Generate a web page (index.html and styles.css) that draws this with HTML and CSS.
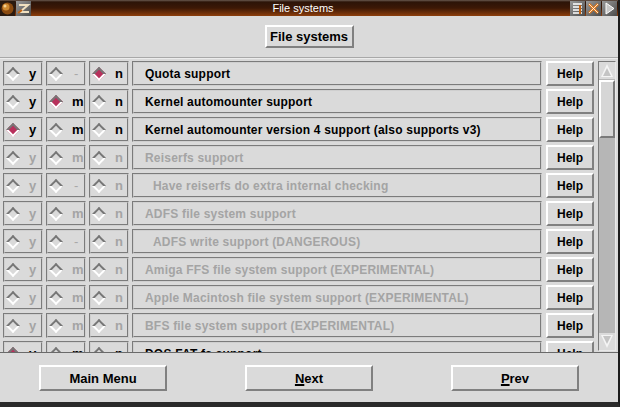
FILE: index.html
```html
<!DOCTYPE html>
<html lang="en">
<head>
    <meta charset="UTF-8">
    <title>File systems</title>
    <link rel="stylesheet" href="styles.css">
</head>
<body>
<div class="window">
    <div class="titlebar">
        <div class="tb-icons">
            <span class="tb-btn dark">
                <svg width="15" height="15" viewBox="0 0 15 15"><circle cx="7.5" cy="7.5" r="6" fill="#8a4a10"/><circle cx="6" cy="6" r="3.5" fill="#d08a30"/><circle cx="5" cy="5" r="1.5" fill="#f4d090"/></svg>
            </span>
            <span class="tb-btn">
                <svg width="15" height="15" viewBox="0 0 15 15"><path d="M3 4h9L4 11h9" stroke="#f0e0c0" stroke-width="2" fill="none"/><path d="M2 12l4-3" stroke="#c06010" stroke-width="2"/></svg>
            </span>
        </div>
        <div class="tb-title">File systems</div>
        <div class="tb-icons">
            <span class="tb-btn">
                <svg width="15" height="15" viewBox="0 0 15 15"><path d="M3 3h9M3 6h9M3 9h9M3 12h9" stroke="#fff" stroke-width="1.5"/><path d="M10 4v9" stroke="#c06010" stroke-width="2"/></svg>
            </span>
            <span class="tb-btn">
                <svg width="15" height="15" viewBox="0 0 15 15"><path d="M3 3l9 9M12 3l-9 9" stroke="#e07818" stroke-width="2.5"/><path d="M3 3l9 9M12 3l-9 9" stroke="#fff" stroke-width="0.8"/></svg>
            </span>
            <span class="tb-btn">
                <svg width="15" height="15" viewBox="0 0 15 15"><path d="M4 2l8 5.5L4 13z" fill="#c8c8c8" stroke="#fff"/></svg>
            </span>
        </div>
    </div>

    <div class="header">
        <button class="btn title-btn">File systems</button>
    </div>

    <div class="main">
        <div class="rows">
            <div class="row">
                <div class="opt"><span class="dia"></span>y</div>
                <div class="opt"><span class="dia"></span><span class="dash">-</span></div>
                <div class="opt"><span class="dia on"></span>n</div>
                <div class="label">Quota support</div>
                <button class="btn help">Help</button>
            </div>
            <div class="row">
                <div class="opt"><span class="dia"></span>y</div>
                <div class="opt"><span class="dia on"></span>m</div>
                <div class="opt"><span class="dia"></span>n</div>
                <div class="label">Kernel automounter support</div>
                <button class="btn help">Help</button>
            </div>
            <div class="row">
                <div class="opt"><span class="dia on"></span>y</div>
                <div class="opt"><span class="dia"></span>m</div>
                <div class="opt"><span class="dia"></span>n</div>
                <div class="label">Kernel automounter version 4 support (also supports v3)</div>
                <button class="btn help">Help</button>
            </div>
            <div class="row off">
                <div class="opt"><span class="dia"></span>y</div>
                <div class="opt"><span class="dia"></span>m</div>
                <div class="opt"><span class="dia"></span>n</div>
                <div class="label">Reiserfs support</div>
                <button class="btn help">Help</button>
            </div>
            <div class="row off">
                <div class="opt"><span class="dia"></span>y</div>
                <div class="opt"><span class="dia"></span><span class="dash">-</span></div>
                <div class="opt"><span class="dia"></span>n</div>
                <div class="label sub">Have reiserfs do extra internal checking</div>
                <button class="btn help">Help</button>
            </div>
            <div class="row off">
                <div class="opt"><span class="dia"></span>y</div>
                <div class="opt"><span class="dia"></span>m</div>
                <div class="opt"><span class="dia"></span>n</div>
                <div class="label">ADFS file system support</div>
                <button class="btn help">Help</button>
            </div>
            <div class="row off">
                <div class="opt"><span class="dia"></span>y</div>
                <div class="opt"><span class="dia"></span><span class="dash">-</span></div>
                <div class="opt"><span class="dia"></span>n</div>
                <div class="label sub">ADFS write support (DANGEROUS)</div>
                <button class="btn help">Help</button>
            </div>
            <div class="row off">
                <div class="opt"><span class="dia"></span>y</div>
                <div class="opt"><span class="dia"></span>m</div>
                <div class="opt"><span class="dia"></span>n</div>
                <div class="label">Amiga FFS file system support (EXPERIMENTAL)</div>
                <button class="btn help">Help</button>
            </div>
            <div class="row off">
                <div class="opt"><span class="dia"></span>y</div>
                <div class="opt"><span class="dia"></span>m</div>
                <div class="opt"><span class="dia"></span>n</div>
                <div class="label">Apple Macintosh file system support (EXPERIMENTAL)</div>
                <button class="btn help">Help</button>
            </div>
            <div class="row off">
                <div class="opt"><span class="dia"></span>y</div>
                <div class="opt"><span class="dia"></span>m</div>
                <div class="opt"><span class="dia"></span>n</div>
                <div class="label">BFS file system support (EXPERIMENTAL)</div>
                <button class="btn help">Help</button>
            </div>
            <div class="row">
                <div class="opt"><span class="dia on"></span>y</div>
                <div class="opt"><span class="dia"></span>m</div>
                <div class="opt"><span class="dia"></span>n</div>
                <div class="label">DOS FAT fs support</div>
                <button class="btn help">Help</button>
            </div>
        </div>
        <div class="scrollbar">
            <div class="arrow up"></div>
            <div class="trough">
                <div class="slider"></div>
            </div>
            <div class="arrow down"></div>
        </div>
    </div>

    <div class="footer">
        <button class="btn nav">Main Menu</button>
        <button class="btn nav"><u>N</u>ext</button>
        <button class="btn nav"><u>P</u>rev</button>
    </div>
</div>
</body>
</html>
```

FILE: styles.css
```css
* {
    box-sizing: border-box;
}
body {
    margin: 0;
    padding: 0;
    background-color: #1a1a1a;
    font-family: "Liberation Sans", Arial, sans-serif;
}
.window {
    width: 620px;
    height: 407px;
    background-color: #dadada;
    border-right: 2px solid #1c1c1c;
    border-bottom: 5px solid #2a2a2a;
    display: flex;
    flex-direction: column;
    overflow: hidden;
}

/* barra de titulo */
.titlebar {
    height: 16px;
    flex-shrink: 0;
    display: flex;
    justify-content: space-between;
    align-items: center;
    background: linear-gradient(to bottom, #6a5a50 0, #2c1408 2px, #3c1806 8px, #8c3e0c 16px);
}
.tb-icons {
    display: flex;
}
.tb-btn {
    width: 15px;
    height: 15px;
    margin-right: 1px;
    background: linear-gradient(135deg, #9a9a9a, #4a4a4a);
    display: flex;
}
.tb-btn.dark {
    background: #2a1a10;
}
.tb-title {
    color: #ffffff;
    font-size: 11px;
    margin-left: 4px;
    padding-bottom: 1px;
}

/* cabecera */
.header {
    height: 42px;
    flex-shrink: 0;
    display: flex;
    justify-content: center;
    align-items: flex-start;
    border-bottom: 1px solid #a8a8a8;
}
.btn {
    font-family: "Liberation Sans", Arial, sans-serif;
    font-weight: bold;
    font-size: 12px;
    color: #000;
    background-color: #dadada;
    border: 2px solid;
    border-color: #ffffff #808080 #808080 #ffffff;
    padding: 0;
    margin: 0;
}
.title-btn {
    margin-top: 9px;
    width: 89px;
    height: 23px;
    font-size: 13px;
}

/* lista */
.main {
    height: 294px;
    flex-shrink: 0;
    display: flex;
    border-top: 1px solid #ececec;
}
.rows {
    width: 596px;
    padding-top: 2px;
    display: flex;
    flex-direction: column;
    gap: 3px;
    overflow: hidden;
}
.row {
    height: 25px;
    flex-shrink: 0;
    display: flex;
    gap: 3px;
    padding-left: 3px;
}
.opt {
    width: 40px;
    border: 2px groove #cfcfcf;
    display: flex;
    align-items: center;
    padding-left: 2px;
    gap: 11px;
    font-size: 13px;
    font-weight: bold;
    color: #000;
}
.dia {
    width: 10px;
    height: 10px;
    transform: rotate(45deg);
    border: 2px solid;
    border-color: #767676 #ffffff #ffffff #767676;
    background-color: #dadada;
    flex-shrink: 0;
    margin-left: 1px;
}
.dia.on {
    background-color: #b8305c;
}
.dash {
    color: #a8a8a8;
    font-weight: normal;
    padding-left: 2px;
}
.label {
    width: 410px;
    border: 2px groove #cfcfcf;
    display: flex;
    align-items: center;
    padding-left: 11px;
    font-size: 12px;
    font-weight: bold;
    letter-spacing: 0.2px;
    color: #000;
    white-space: nowrap;
    overflow: hidden;
}
.label.sub {
    padding-left: 19px;
}
.row.off .opt,
.row.off .label {
    color: #a4a4a4;
}
.help {
    width: 48px;
    height: 25px;
    margin-left: 1px;
}

/* barra de desplazamiento */
.scrollbar {
    width: 18px;
    margin: 2px 2px 1px 2px;
    background-color: #b6b6b6;
    border: 1px solid;
    border-color: #7a7a7a #e8e8e8 #e8e8e8 #7a7a7a;
    display: flex;
    flex-direction: column;
}
.arrow {
    height: 17px;
    flex-shrink: 0;
    background-color: #dadada;
    position: relative;
}
.arrow::after {
    content: "";
    position: absolute;
    left: 2px;
    border-left: 6px solid transparent;
    border-right: 6px solid transparent;
}
.arrow.up::after {
    top: 2px;
    border-bottom: 13px solid #f4f4f4;
}
.arrow.down::after {
    bottom: 2px;
    border-top: 13px solid #f4f4f4;
}
.arrow.up::before,
.arrow.down::before {
    content: "";
    position: absolute;
    left: 4px;
    border-left: 4px solid transparent;
    border-right: 4px solid transparent;
    z-index: 1;
}
.arrow.up::before {
    top: 6px;
    border-bottom: 8px solid #c4c4c4;
}
.arrow.down::before {
    bottom: 6px;
    border-top: 8px solid #c4c4c4;
}
.trough {
    flex: 1;
    padding-top: 1px;
}
.slider {
    height: 58px;
    background-color: #d6d6d6;
    border: 2px solid;
    border-color: #ffffff #7a7a7a #7a7a7a #ffffff;
}

/* pie */
.footer {
    flex: 1;
    border-top: 1px solid #6a6a6a;
    display: grid;
    grid-template-columns: 1fr 1fr 1fr;
    justify-items: center;
    align-items: start;
    padding-top: 12px;
}
.nav {
    width: 128px;
    height: 26px;
    font-size: 13px;
}
.nav u {
    text-decoration-thickness: 2px;
}
```
